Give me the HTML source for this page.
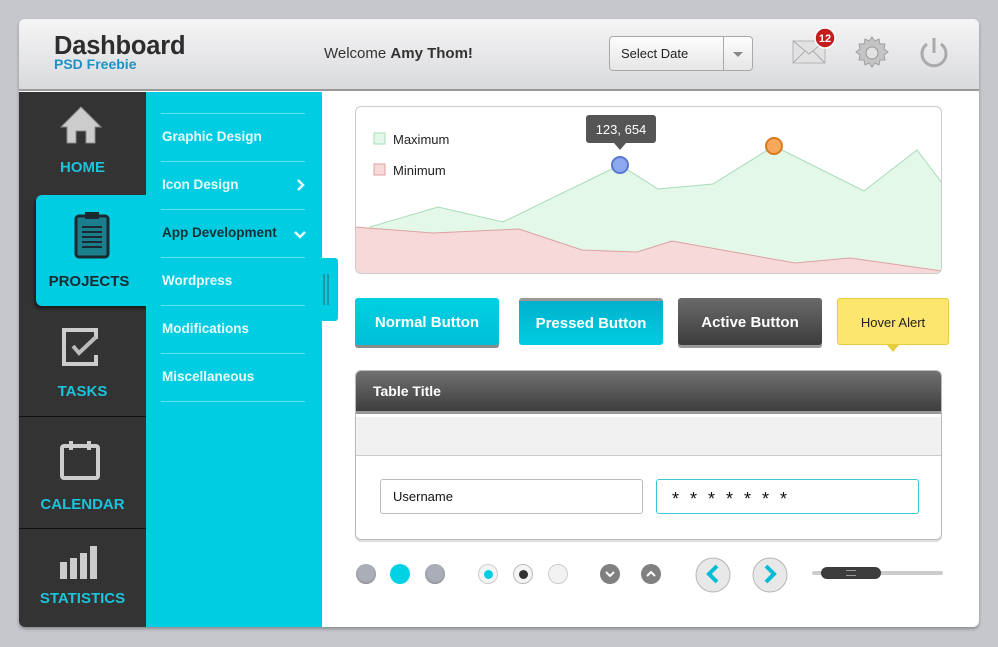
<!DOCTYPE html>
<html><head><meta charset="utf-8"><style>
*{margin:0;padding:0;box-sizing:border-box}
body{width:998px;height:647px;background:#c5c7cc;font-family:"Liberation Sans",Arial,sans-serif;position:relative;overflow:hidden}
.abs{position:absolute}
.card{left:19px;top:19px;width:960px;height:608px;background:#fff;border-radius:6px;box-shadow:0 2px 3px rgba(0,0,0,.3);overflow:hidden}
.hdr{left:0;top:0;width:960px;height:72px;background:linear-gradient(#f5f5f6,#d9dadc);border-bottom:2px solid #9a9a9a}
.side{left:0;top:73px;width:127px;height:535px;background:#333}
.sub{left:127px;top:73px;width:176px;height:535px;background:#00cde1}
.nav{position:absolute;left:0;width:127px;text-align:center;color:#1cc3da;font-weight:bold;font-size:15px}
.sl{position:absolute;left:15px;width:144px;border-top:1px solid #5fe0ee}
.st{position:absolute;left:16px;color:#e9fbfd;font-weight:bold;font-size:13.5px}
.btn{position:absolute;top:298px;height:47px;border-radius:3px;color:#fff;font-weight:bold;font-size:15px;text-align:center;line-height:49px}
.dot{position:absolute;top:564px;width:20px;height:20px;border-radius:50%}
</style></head><body>
<div class="abs card">
 <div class="abs hdr">
  <div class="abs" style="left:35px;top:13px;font-size:25.5px;font-weight:bold;color:#2d2d2d;letter-spacing:-.2px">Dashboard</div>
  <div class="abs" style="left:35px;top:37px;font-size:14px;font-weight:bold;color:#1e92c6">PSD Freebie</div>
  <div class="abs" style="left:305px;top:26px;font-size:15px;color:#333">Welcome <b>Amy Thom!</b></div>
  <div class="abs" style="left:590px;top:17px;width:144px;height:35px;border:1px solid #a9a9a9;border-radius:4px;background:linear-gradient(#fdfdfd,#e6e6e6)">
   <div class="abs" style="left:11px;top:9px;font-size:13px;color:#222">Select Date</div>
   <div class="abs" style="left:113px;top:0;width:1px;height:33px;background:#aaa"></div>
   <div class="abs" style="left:123px;top:15px;border:5px solid transparent;border-top:5px solid #888;border-bottom:0"></div>
  </div>
  <svg class="abs" style="left:770px;top:8px" width="60" height="50"><rect x="4" y="14" width="32" height="22" fill="#e2e2e2" stroke="#b5b5b5"/><path d="M4 14 L20 27 L36 14 M4 36 L16 24 M36 36 L24 24" stroke="#aaa" fill="none"/><circle cx="36" cy="11" r="10" fill="#c41d1d" stroke="#fff" stroke-width="1.5"/><text x="36" y="15" font-size="11" font-weight="bold" fill="#fff" text-anchor="middle" font-family="Liberation Sans">12</text></svg>
  <svg class="abs" style="left:836px;top:17px" width="34" height="34"><g fill="#c4c4c4" stroke="#a0a0a0"><path d="M17 1l3 4 4-2 1 5 5 0-1 5 4 3-4 3 1 5-5 0-1 5-4-2-3 4-3-4-4 2-1-5-5 0 1-5-4-3 4-3-1-5 5 0 1-5 4 2z"/></g><circle cx="17" cy="17" r="6" fill="#e2e2e2" stroke="#999"/></svg>
  <svg class="abs" style="left:898px;top:16px" width="34" height="36"><path d="M10 9 A12 12 0 1 0 24 9" stroke="#aaa" stroke-width="3" fill="none"/><line x1="17" y1="3" x2="17" y2="18" stroke="#aaa" stroke-width="3"/></svg>
 </div>
 <div class="abs side">
  <svg class="abs" style="left:41px;top:13px" width="42" height="40"><path d="M21 2 L41 22 L35 22 L35 38 L26 38 L26 26 L16 26 L16 38 L7 38 L7 22 L1 22 Z" fill="#ccc" stroke="#888"/></svg>
  <div class="nav" style="top:67px">HOME</div>
  <div class="nav" style="top:291px">TASKS</div>
  <div class="abs" style="left:0;top:324px;width:127px;height:1px;background:#111"></div>
  <svg class="abs" style="left:42px;top:235px" width="40" height="40"><path d="M35 12 V3 H3 V37 H35 V28" fill="none" stroke="#ccc" stroke-width="4"/><path d="M12 19 L18 26 L35 10" fill="none" stroke="#bbb" stroke-width="4"/></svg>
  <svg class="abs" style="left:41px;top:348px" width="40" height="40"><rect x="2" y="6" width="36" height="32" rx="2" fill="none" stroke="#ccc" stroke-width="4"/><rect x="9" y="1" width="4" height="9" fill="#ccc"/><rect x="27" y="1" width="4" height="9" fill="#ccc"/></svg>
  <div class="nav" style="top:404px">CALENDAR</div>
  <div class="abs" style="left:0;top:436px;width:127px;height:1px;background:#111"></div>
  <svg class="abs" style="left:40px;top:453px" width="44" height="36"><g fill="#ccc"><rect x="1" y="17" width="7" height="17"/><rect x="11" y="13" width="7" height="21"/><rect x="21" y="8" width="7" height="26"/><rect x="31" y="1" width="7" height="33"/></g></svg>
  <div class="nav" style="top:498px">STATISTICS</div>
 </div>
 <div class="abs" style="left:17px;top:176px;width:112px;height:111px;background:#00cde1;border-radius:6px 0 0 6px;box-shadow:-2px 3px 2px rgba(0,0,0,.4)">
  <svg class="abs" style="left:38px;top:14px" width="36" height="50"><rect x="2" y="7" width="32" height="41" rx="3" fill="#1a7e8c" stroke="#1a2a30" stroke-width="3"/><rect x="11" y="3" width="14" height="7" fill="#1a2a30"/><g stroke="#1a2a30" stroke-width="2"><line x1="8" y1="18" x2="28" y2="18"/><line x1="8" y1="23" x2="28" y2="23"/><line x1="8" y1="28" x2="28" y2="28"/><line x1="8" y1="33" x2="28" y2="33"/><line x1="8" y1="38" x2="28" y2="38"/></g></svg>
  <div class="abs" style="left:0;width:106px;top:78px;text-align:center;font-weight:bold;font-size:15px;color:#1b2a30">PROJECTS</div>
 </div>
 <div class="abs sub">
  <div class="sl" style="top:21px"></div><div class="st" style="top:37px">Graphic Design</div>
  <div class="sl" style="top:69px"></div><div class="st" style="top:85px">Icon Design</div>
  <svg class="abs" style="left:150px;top:87px" width="10" height="12"><path d="M2 1 L7 6 L2 11" stroke="#e9fbfd" stroke-width="2.5" fill="none"/></svg>
  <div class="sl" style="top:117px"></div><div class="st" style="top:133px;color:#173038">App Development</div>
  <svg class="abs" style="left:148px;top:138px" width="12" height="10"><path d="M1 2 L6 7 L11 2" stroke="#e9fbfd" stroke-width="2.5" fill="none"/></svg>
  <div class="sl" style="top:165px"></div><div class="st" style="top:181px">Wordpress</div>
  <div class="sl" style="top:213px"></div><div class="st" style="top:229px">Modifications</div>
  <div class="sl" style="top:261px"></div><div class="st" style="top:277px">Miscellaneous</div>
  <div class="sl" style="top:309px"></div>
 </div>
 <div class="abs" style="left:303px;top:239px;width:16px;height:63px;background:#00cde1;border-radius:0 3px 3px 0">
  <div class="abs" style="left:1px;top:16px;width:2px;height:31px;background:#1a9aa8"></div><div class="abs" style="left:5px;top:16px;width:2px;height:31px;background:#1a9aa8"></div>
 </div>
</div>
<div class="abs" style="left:355px;top:106px;width:587px;height:168px;border:1px solid #ccc;border-radius:6px;overflow:hidden"></div>
<svg class="abs" style="left:0;top:0" width="998" height="647">
 <defs><clipPath id="c"><rect x="356" y="107" width="585" height="166" rx="5"/></clipPath></defs>
 <g clip-path="url(#c)">
 <path d="M370 227 L438 207 L503 222 L620 165 L658 189 L713 184 L774 146 L864 191 L917 150 L942 183 L942 274 L370 274Z" fill="#e4f8ea" stroke="#a9dcb8"/>
 <path d="M355 227 L433 233 L519 229 L582 250 L637 252 L672 241 L795 263 L850 258 L942 271 L942 274 L355 274Z" fill="#f7d9d9" stroke="#dca2a2"/>
 </g>
 <circle cx="620" cy="165" r="8" fill="#8ea8f0" stroke="#5a78d0" stroke-width="2"/>
 <circle cx="774" cy="146" r="8" fill="#f8a85a" stroke="#d87a20" stroke-width="2"/>
 <rect x="374" y="133" width="11" height="11" fill="#e4f8ea" stroke="#a9dcb8"/><text x="393" y="144" font-size="13" font-family="Liberation Sans" fill="#222">Maximum</text>
 <rect x="374" y="164" width="11" height="11" fill="#f7d9d9" stroke="#dca2a2"/><text x="393" y="175" font-size="13" font-family="Liberation Sans" fill="#222">Minimum</text>
 <rect x="586" y="115" width="70" height="28" rx="3" fill="#555"/><path d="M614 143 L620 150 L626 143Z" fill="#555"/>
 <text x="621" y="134" font-size="13" font-family="Liberation Sans" fill="#fff" text-anchor="middle">123, 654</text>
</svg>
<div class="btn" style="left:355px;width:144px;background:linear-gradient(#00d0e2,#00bfd8);box-shadow:0 3px 0 #8a8a8a">Normal Button</div>
<div class="btn" style="left:519px;width:144px;background:linear-gradient(#00b0cc,#00cde1);border-top:3px solid #999;line-height:46px">Pressed Button</div>
<div class="btn" style="left:678px;width:144px;background:linear-gradient(#6a6a6a,#3c3c3c);box-shadow:0 3px 0 #999">Active Button</div>
<div class="btn" style="left:837px;width:112px;background:#fde66e;border:1px solid #e9cc40;color:#222;font-weight:normal;font-size:13px;line-height:47px">Hover Alert</div>
<div class="abs" style="left:887px;top:345px;border:6px solid transparent;border-top:7px solid #e9cc40;border-bottom:0"></div>
<div class="abs" style="left:355px;top:370px;width:587px;height:170px;border:1px solid #bbb;border-radius:6px;overflow:hidden;box-shadow:0 2px 1px #ddd">
 <div class="abs" style="left:0;top:0;width:587px;height:43px;background:linear-gradient(#727070,#3e3e3e);border-bottom:3px solid #999"></div>
 <div class="abs" style="left:17px;top:12px;color:#fff;font-weight:bold;font-size:14px">Table Title</div>
 <div class="abs" style="left:0;top:46px;width:587px;height:39px;background:#f1f1f1;border-bottom:1px solid #ccc"></div>
 <div class="abs" style="left:24px;top:108px;width:263px;height:35px;border:1px solid #bbb;border-radius:3px;font-size:13px;padding:9px 12px;color:#111">Username</div>
 <div class="abs" style="left:300px;top:108px;width:263px;height:35px;border:1px solid #3bc8d8;border-radius:3px;font-size:18px;padding:9px 15px;color:#111;letter-spacing:3px">* * * * * * *</div>
</div>
<div class="dot" style="left:356px;background:#a9aeb8;box-shadow:inset 0 -1px 2px #888"></div>
<div class="dot" style="left:390px;background:#00d2e6"></div>
<div class="dot" style="left:425px;background:#a9aeb8;box-shadow:inset 0 -1px 2px #888"></div>
<div class="dot" style="left:478px;background:#f4f4f4;border:1px solid #ccc"><div class="abs" style="left:5px;top:5px;width:9px;height:9px;border-radius:50%;background:#00cde1"></div></div>
<div class="dot" style="left:513px;background:#f4f4f4;border:1px solid #bbb"><div class="abs" style="left:5px;top:5px;width:9px;height:9px;border-radius:50%;background:#333"></div></div>
<div class="dot" style="left:548px;background:#f2f2f2;border:1px solid #ccc"></div>
<svg class="abs" style="left:600px;top:564px" width="62" height="20"><circle cx="10" cy="10" r="10" fill="#808080"/><path d="M6 8 L10 12 L14 8" stroke="#fff" stroke-width="2" fill="none"/><circle cx="51" cy="10" r="10" fill="#808080"/><path d="M47 12 L51 8 L55 12" stroke="#fff" stroke-width="2" fill="none"/></svg>
<svg class="abs" style="left:692px;top:555px" width="100" height="40"><circle cx="21" cy="20" r="17" fill="#e8e8e8" stroke="#b5b5b5"/><path d="M25 11 L17 19 L25 27" stroke="#00bcd4" stroke-width="4" fill="none"/><circle cx="78" cy="20" r="17" fill="#e8e8e8" stroke="#b5b5b5"/><path d="M74 11 L82 19 L74 27" stroke="#00bcd4" stroke-width="4" fill="none"/></svg>
<div class="abs" style="left:812px;top:571px;width:131px;height:4px;background:#ccc;border-radius:2px"></div>
<div class="abs" style="left:821px;top:567px;width:60px;height:12px;background:#3c3c3c;border-radius:6px"><div class="abs" style="left:25px;top:3px;width:10px;height:6px;border-top:1px solid #999;border-bottom:1px solid #999"></div></div>
</body></html>
